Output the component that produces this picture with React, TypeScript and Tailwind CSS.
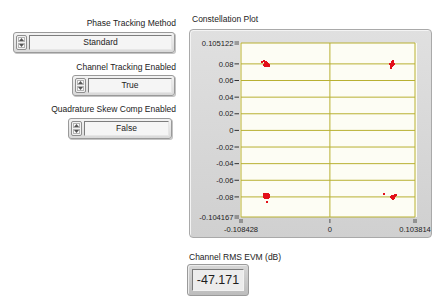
import React from "react";

const FONT = { fontFamily: '"Liberation Sans", Arial, sans-serif' };

// plot area inside the graph frame (frame-relative pixels)
const PX0 = 51;
const PX1 = 225;
const PY0 = 13;
const PY1 = 187;
const XMIN = -0.108428;
const XMAX = 0.103814;
const YMIN = -0.104167;
const YMAX = 0.105122;

const sx = (v: number) => PX0 + ((v - XMIN) / (XMAX - XMIN)) * (PX1 - PX0);
const sy = (v: number) => PY0 + ((YMAX - v) / (YMAX - YMIN)) * (PY1 - PY0);

const yTicks = [0.08, 0.06, 0.04, 0.02, 0, -0.02, -0.04, -0.06, -0.08];

const clusters: { cx: number; cy: number; pts: [number, number][] }[] = [
  {
    cx: 76,
    cy: 34,
    pts: [
      [-2, -3], [0, -2], [-1, -1], [1, -1], [0, 0], [1, 0], [2, 0], [-2, 1],
      [-1, 1], [0, 1], [1, 1], [2, 1], [3, 1], [-1, 2], [1, 2], [3, 2], [-4, -2],
    ],
  },
  {
    cx: 202,
    cy: 35,
    pts: [
      [1, -4], [0, -3], [1, -2], [-2, -1], [-1, -1], [0, -1], [1, -1], [2, -1],
      [0, 0], [1, 0], [-1, 1], [0, 1], [-1, 2], [-1, 3],
    ],
  },
  {
    cx: 77,
    cy: 166,
    pts: [
      [-3, -2], [-2, -2], [0, -2], [1, -2], [-3, -1], [-1, -1], [0, -1], [2, -1],
      [-2, 0], [-1, 0], [0, 0], [1, 0], [-3, 1], [-1, 1], [1, 1], [2, 1],
      [-2, 2], [0, 2], [1, 2], [0, 6],
    ],
  },
  {
    cx: 203,
    cy: 167,
    pts: [
      [-9, -3], [2, -2], [3, -2], [-1, -1], [0, -1], [1, -1], [2, -1], [-2, 0],
      [-1, 0], [0, 0], [1, 0], [-1, 1], [0, 1], [1, 1], [0, 2],
    ],
  },
];

function Spinner() {
  return (
    <div className="flex w-[11px] flex-col gap-[1px] rounded-[2px] border border-[#8e8e8e] bg-[#f2f2f2] p-[1px]">
      <div className="flex flex-1 items-center justify-center border border-[#b4b4b4] bg-[#fafafa]">
        <svg width="5" height="3" viewBox="0 0 5 3">
          <path d="M0 3 L2.5 0 L5 3 Z" fill="#555" />
        </svg>
      </div>
      <div className="flex flex-1 items-center justify-center border border-[#b4b4b4] bg-[#fafafa]">
        <svg width="5" height="3" viewBox="0 0 5 3">
          <path d="M0 0 L2.5 3 L5 0 Z" fill="#555" />
        </svg>
      </div>
    </div>
  );
}

function Ring({ value, className }: { value: string; className: string }) {
  return (
    <div
      className={`flex h-[21px] gap-[2px] rounded-[3px] border border-[#9a9a9a] bg-gradient-to-b from-[#f3f3f3] to-[#d9d9d9] p-[2px] shadow-[1px_1px_0_#c4c4c4] ${className}`}
    >
      <Spinner />
      <div className="flex flex-1 items-center justify-center border-t border-l border-[#7d7d7d] border-r-[#e6e6e6] border-b-[#e6e6e6] border-r border-b bg-[#f5f5f5] text-[8.5px] text-[#222]">
        {value}
      </div>
    </div>
  );
}

function Label({ children, className = "" }: { children: React.ReactNode; className?: string }) {
  return <div className={`text-[8.5px] leading-[12px] text-[#222] ${className}`}>{children}</div>;
}

function ConstellationPlot() {
  const xZero = sx(0);
  const grid = "#b8b032";
  return (
    <div className="mt-[4px] h-[209px] w-[243px] rounded-[4px] border border-[#a9a9a9] bg-gradient-to-b from-[#e0e0e0] to-[#d0d0d0] shadow-[inset_1px_1px_0_#f4f4f4]">
      <svg width="243" height="209" viewBox="0 0 243 209" style={FONT}>
        <rect x={PX0 - 1} y={PY0} width={PX1 - PX0 + 3} height={PY1 - PY0} fill="#fdfdf4" />
        {[YMAX, ...yTicks, YMIN].map((v) => (
          <line key={`h${v}`} x1={PX0} x2={PX1} y1={sy(v)} y2={sy(v)} stroke={grid} strokeWidth="1" />
        ))}
        {[PX0, xZero, PX1].map((x) => (
          <line key={`v${x}`} x1={x} x2={x} y1={PY0} y2={PY1} stroke={grid} strokeWidth="1" />
        ))}
        {/* y axis */}
        {yTicks.map((v) => (
          <g key={`yl${v}`}>
            <line x1={44.5} x2={49} y1={sy(v)} y2={sy(v)} stroke="#333" strokeWidth="1" />
            <text x={43.5} y={sy(v) + 2.7} fontSize="7.6" textAnchor="end" fill="#222">
              {v === 0 ? "0" : v.toFixed(2)}
            </text>
          </g>
        ))}
        {[YMAX, YMIN].map((v) => (
          <g key={`ye${v}`}>
            <line x1={44.5} x2={49} y1={sy(v) - 1} y2={sy(v) - 1} stroke="#333" strokeWidth="0.8" />
            <line x1={44.5} x2={49} y1={sy(v) + 1} y2={sy(v) + 1} stroke="#333" strokeWidth="0.8" />
            <text x={43.5} y={sy(v) + 2.7} fontSize="7.6" textAnchor="end" fill="#222">
              {v.toString()}
            </text>
          </g>
        ))}
        {/* x axis */}
        {[XMIN, 0, XMAX].map((v) => (
          <g key={`xl${v}`}>
            <line x1={sx(v) - (v === 0 ? 0 : 1)} x2={sx(v) - (v === 0 ? 0 : 1)} y1={PY1 + 2} y2={PY1 + 6} stroke="#333" strokeWidth="0.8" />
            {v !== 0 && (
              <line x1={sx(v) + 1} x2={sx(v) + 1} y1={PY1 + 2} y2={PY1 + 6} stroke="#333" strokeWidth="0.8" />
            )}
            <text x={sx(v)} y={PY1 + 15} fontSize="7.6" textAnchor="middle" fill="#222">
              {v.toString()}
            </text>
          </g>
        ))}
        {clusters.map((c, i) =>
          c.pts.map(([dx, dy], j) => (
            <rect key={`p${i}-${j}`} x={c.cx + dx - 1} y={c.cy + dy - 1} width="2" height="2" fill="#e3101a" />
          ))
        )}
      </svg>
    </div>
  );
}

export default function App() {
  return (
    <div className="flex h-[308px] w-[443px] bg-white" style={FONT}>
      <div className="flex w-[181px] flex-col items-end pr-[5px] pt-[17px]">
        <Label>Phase Tracking Method</Label>
        <Ring value="Standard" className="mt-[3px] mr-[1px] w-[162px]" />
        <Label className="mt-[8px]">Channel Tracking Enabled</Label>
        <Ring value="True" className="mt-[2px] mr-[1px] w-[103px]" />
        <Label className="mt-[7px]">Quadrature Skew Comp Enabled</Label>
        <Ring value="False" className="mt-[3px] mr-[4px] w-[104px]" />
      </div>
      <div className="ml-[8px] flex flex-col pt-[13px]">
        <Label className="pl-[3px]">Constellation Plot</Label>
        <ConstellationPlot />
        <Label className="mt-[13px]">Channel RMS EVM (dB)</Label>
        <div className="-ml-[2px] mt-[1px] flex h-[32px] w-[62px] rounded-[3px] border border-[#9a9a9a] bg-gradient-to-b from-[#d6d6d6] to-[#bdbdbd] p-[4px] shadow-[inset_1px_1px_0_#ececec]">
          <div className="flex flex-1 items-center justify-center border border-t-[#7a7a7a] border-l-[#7a7a7a] border-r-[#f2f2f2] border-b-[#f2f2f2] bg-[#ececec] text-[12.5px] text-[#1e1e1e]">
            -47.171
          </div>
        </div>
      </div>
    </div>
  );
}
